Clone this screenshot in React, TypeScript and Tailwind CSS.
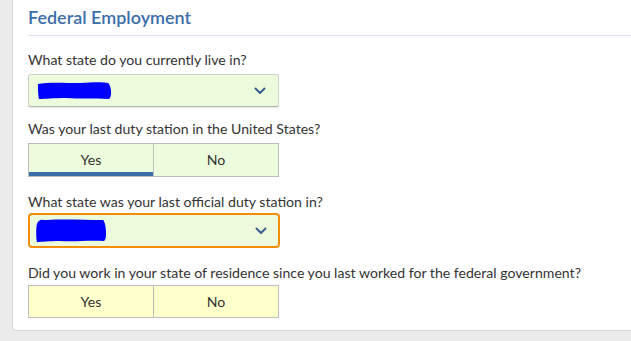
import React from "react";

const Chevron = () => (
  <svg width="12" height="8" viewBox="0 0 12 8" className="shrink-0">
    <path d="M1.5 1.5 L6 6 L10.5 1.5" fill="none" stroke="#3b5f8f" strokeWidth="2" strokeLinecap="round" strokeLinejoin="round" />
  </svg>
);

const Scribble1 = () => (
  <svg width="76" height="20" viewBox="0 0 80 20" preserveAspectRatio="none" className="block">
    <path d="M1 3 C10 1 30 2 45 2 C60 1 70 1 75 2 C77 4 78 8 78 12 C78 15 77 17 76 18 C60 17 45 18 30 17 C18 17 8 18 2 18 C1 13 1 7 1 3 Z" fill="#0000ff" />
  </svg>
);

const Scribble2 = () => (
  <svg width="74" height="26" viewBox="0 0 76 26" preserveAspectRatio="none" className="block">
    <path d="M4 3 C6 1 8 2 12 2 C30 1 50 2 70 2 C72 4 73 10 73 16 C73 20 72 22 71 23 C55 22 40 24 25 23 C15 23 6 24 2 24 C1 18 1 10 2 6 C2 5 3 4 4 3 Z" fill="#0000ff" />
  </svg>
);

function Label({ children, className = "" }: { children: React.ReactNode; className?: string }) {
  return <div className={`text-[14.1px] leading-[20px] text-[#333333] ${className}`}>{children}</div>;
}

export default function App() {
  return (
    <div
      className="h-[341px] w-[631px] overflow-hidden bg-[#ececec] pl-[12px]"
      style={{ fontFamily: 'Lato, "Noto Sans", sans-serif' }}
    >
      <div className="h-[331px] rounded-bl-[4px] border-b border-l border-[#d8d8d8] bg-white pl-[15px]">
        <div className="pt-[4px] text-[18px] leading-[26px] font-semibold text-[#3b6ea8]">Federal Employment</div>
        <div className="mt-[5px] h-px bg-[#dbe0ec]" />

        <Label className="mt-[14px]">What state do you currently live in?</Label>
        <div className="mt-[4px] flex h-[33px] w-[251px] items-center justify-between rounded-[3px] border border-[#cfd4cc] border-b-[#b5b8b3] bg-[#ecfbdc] pl-[8px] pr-[12px] shadow-[0_1px_1px_rgba(0,0,0,0.12)]">
          <Scribble1 />
          <Chevron />
        </div>

        <Label className="mt-[12px]">Was your last duty station in the United States?</Label>
        <div className="mt-[4px] flex h-[34px] w-[251px] border border-[#bdbdbd] bg-[#ecfcdc] text-[14.1px] text-[#333333]">
          <div className="flex flex-1 items-center justify-center border-r border-[#bdbdbd] shadow-[inset_0_-4px_0_#3a6ea8]">Yes</div>
          <div className="flex flex-1 items-center justify-center">No</div>
        </div>

        <Label className="mt-[15px]">What state was your last official duty station in?</Label>
        <div className="mt-[1px] flex h-[35px] w-[252px] items-center justify-between rounded-[4px] border-2 border-[#f58c0a] bg-[#ecfbdc] pl-[5px] pr-[11px]">
          <Scribble2 />
          <Chevron />
        </div>

        <Label className="mt-[15px]">Did you work in your state of residence since you last worked for the federal government?</Label>
        <div className="mt-[2px] flex h-[33px] w-[251px] border border-[#bdbdbd] bg-[#ffffcc] text-[14.1px] text-[#333333]">
          <div className="flex flex-1 items-center justify-center border-r border-[#bdbdbd]">Yes</div>
          <div className="flex flex-1 items-center justify-center">No</div>
        </div>
      </div>
    </div>
  );
}
